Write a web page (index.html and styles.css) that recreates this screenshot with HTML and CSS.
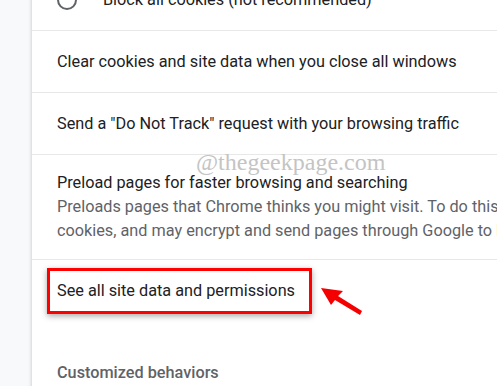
FILE: index.html
```html
<!DOCTYPE html>
<html lang="en">
<head>
  <meta charset="UTF-8" />
  <title>Cookies and other site data</title>
  <link rel="stylesheet" href="styles.css">
</head>
<body>

  <div class="page">
    <div class="card">
      <div class="row radio-row">
        <span class="radio"></span>
        <span class="label">Block all cookies (not recommended)</span>
      </div>
      <div class="row">
        <span class="label">Clear cookies and site data when you close all windows</span>
      </div>
      <div class="row">
        <span class="label">Send a "Do Not Track" request with your browsing traffic</span>
      </div>
      <div class="row tall-row">
        <div class="label">Preload pages for faster browsing and searching</div>
        <div class="secondary">Preloads pages that Chrome thinks you might visit. To do this, Chrome may use</div>
        <div class="secondary">cookies, and may encrypt and send pages through Google to <span class="faded">hide</span> your identity</div>
        <span class="watermark">@thegeekpage.com</span>
      </div>
      <div class="row link-row">
        <span class="label">See all site data and permissions</span>
        <span class="highlight"></span>
        <svg class="arrow" width="50" height="34" viewBox="0 0 50 34">
          <polygon points="2,2 24,5 19,10 43,25 41,29 16,14 12,19" fill="#f40000" />
        </svg>
      </div>
      <div class="section-title">Customized behaviors</div>
    </div>
  </div>

</body>
</html>
```

FILE: styles.css
```css
body {
  margin: 0;
  font-family: Roboto, "Liberation Sans", sans-serif;
  background-color: #f8f9fa;
  color: #202124;
  overflow: hidden;
}

.page {
  padding-left: 32px;
  height: 386px;
  overflow: hidden;
}

.card {
  background: #fff;
  box-shadow: -1px 0 3px rgba(0, 0, 0, 0.15);
  margin-top: -31px;
  min-height: 430px;
  white-space: nowrap;
}

.row {
  display: flex;
  align-items: center;
  padding-left: 25px;
  min-height: 61px;
  border-bottom: 1px solid #e8e8e8;
  position: relative;
}

.label {
  font-size: 16.25px;
  line-height: 24px;
}

.radio-row {
  gap: 26px;
}

.radio {
  width: 16px;
  height: 16px;
  border: 2px solid #5f6368;
  border-radius: 50%;
}

.tall-row {
  flex-direction: column;
  align-items: flex-start;
  padding-top: 16px;
  padding-bottom: 16px;
}

.secondary {
  font-size: 16.25px;
  line-height: 24px;
  color: #5f6368;
}

.faded {
  color: #f0c98a;
}

.watermark {
  position: absolute;
  left: 164px;
  top: -6px;
  font-family: "Liberation Serif", serif;
  font-size: 24px;
  color: #c4c4c4;
}

.link-row {
  border-bottom: none;
}

.highlight {
  position: absolute;
  left: 15px;
  top: 8px;
  width: 259px;
  height: 40px;
  border: 3px solid #f00;
  box-shadow: 0 2px 6px rgba(0, 0, 0, 0.35);
}

.arrow {
  position: absolute;
  left: 287px;
  top: 26px;
}

.section-title {
  padding: 42px 0 0 25px;
  font-size: 16.25px;
  font-weight: 500;
  color: #5f6368;
}
```
